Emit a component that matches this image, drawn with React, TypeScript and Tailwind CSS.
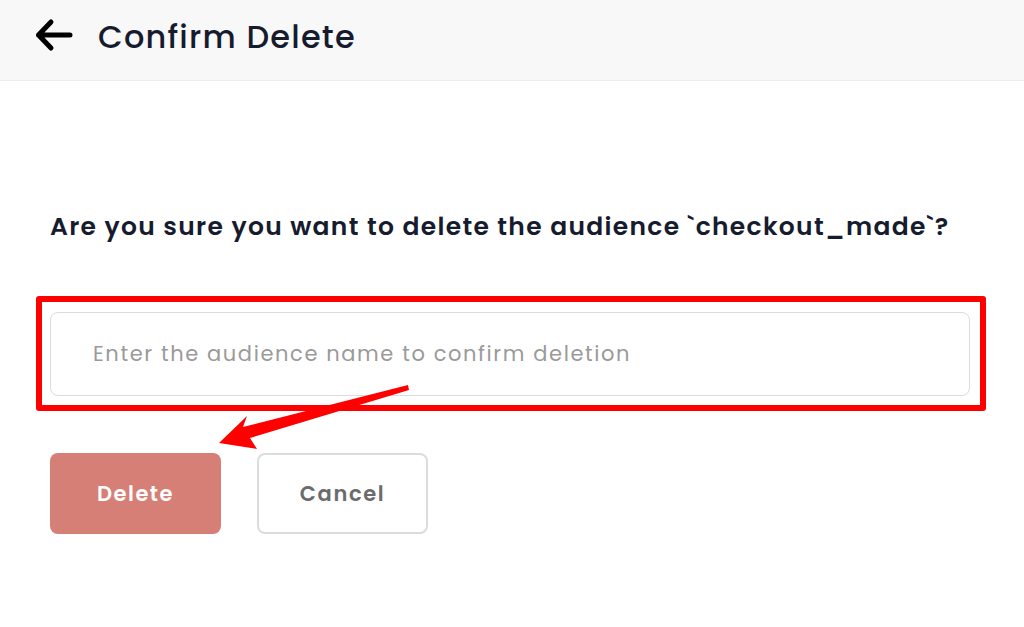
const font = { fontFamily: "Poppins, Inter, 'Noto Sans', sans-serif" };

function BackArrow() {
  return (
    <svg width="40" height="40" viewBox="0 0 40 40" className="mt-[-4px]" fill="none">
      <path d="M16 7 L3.5 20 L16 33 M3.5 20 H35" stroke="#000" strokeWidth="5" strokeLinecap="round" strokeLinejoin="round" />
    </svg>
  );
}

export default function App() {
  return (
    <div className="relative h-[627px] w-[1024px] overflow-hidden bg-white" style={font}>
      <header className="flex h-[81px] items-center border-b border-[#ececec] bg-[#f8f8f8] pb-[6px] pl-[35px]">
        <BackArrow />
        <h1 className="ml-[23px] text-[32px] font-medium tracking-[1.2px] text-[#161b2e]">Confirm Delete</h1>
      </header>

      <main className="px-[50px]">
        <p className="mt-[129px] text-[25px] font-semibold leading-[34px] tracking-[1.3px] text-[#161b2e]">
          Are you sure you want to delete the audience `checkout_made`?
        </p>

        <div className="ml-[-14px] mt-[52px] w-[950px] rounded-[3px] border-[6px] border-[#ff0000] pb-[9px] pl-[8px] pr-[10px] pt-[10px]">
          <input
            className="h-[84px] w-full rounded-[8px] border border-[#dcdce0] bg-white px-[42px] pb-[2px] text-[21px] tracking-[1.6px] text-[#333] outline-none placeholder:text-[#9a9a9a]"
            placeholder="Enter the audience name to confirm deletion"
            style={font}
          />
        </div>

        <div className="mt-[42px] flex gap-[36px]">
          <button className="flex h-[81px] w-[171px] items-center justify-center rounded-[8px] bg-[#d67f77] text-[21px] font-semibold tracking-[1.5px] text-white">
            Delete
          </button>
          <button className="flex h-[81px] w-[171px] items-center justify-center rounded-[8px] border-2 border-[#dcdce0] bg-white text-[21px] font-semibold tracking-[1.6px] text-[#6b6b6b]">
            Cancel
          </button>
        </div>
      </main>

      <svg className="pointer-events-none absolute left-0 top-0" width="1024" height="627">
        <polygon
          points="408,385 243,427 247,416 219,443 257,449 250,438 409,390"
          fill="#ff0000"
        />
      </svg>
    </div>
  );
}
